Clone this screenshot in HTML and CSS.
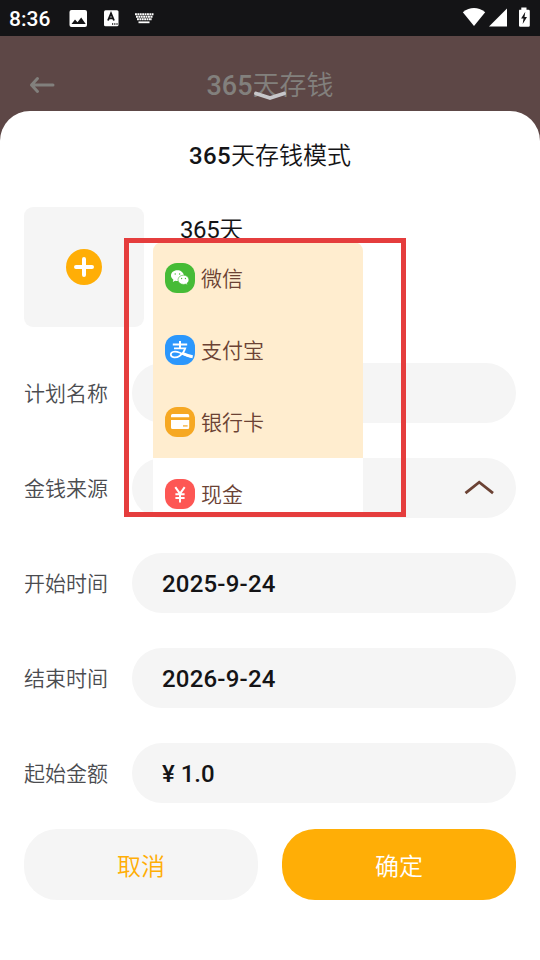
FILE: index.html
```html
<!DOCTYPE html>
<html lang="zh-CN">
<head>
<meta charset="utf-8">
<title>365天存钱</title>
<link rel="stylesheet" href="styles.css">
</head>
<body>
<div class="screen">
  <div class="status">
    <span class="clock">8:36</span>
    <svg class="status-left" width="90" height="20" viewBox="0 0 90 20">
      <rect x="3.500" y="2" width="17.500" height="17" rx="2" fill="#fff"/>
      <path d="M5.500 16l3.500-4.500 2.500 2.700 3.700-4.700 4.500 6.500z" fill="#141416"/>
      <rect x="38" y="2.300" width="14.500" height="16" rx="1.500" fill="#fff"/>
      <path d="M42 12.500L45 5.500l3 7M43 10.400h4" fill="none" stroke="#141416" stroke-width="1.900"/>
      <path d="M46 16h1.200m1 0h1.200m1 0h1.200" stroke="#141416" stroke-width="1.300"/>
      <path d="M69 6.200h18.500M70 8.700h17" stroke="#fff" stroke-width="2" stroke-dasharray="1.900 .5"/>
      <path d="M71 11.300h15" stroke="#fff" stroke-width="1.900" stroke-dasharray="1.900 .5"/>
      <path d="M72.500 14.300h11" stroke="#fff" stroke-width="1.800"/>
    </svg>
    <svg class="status-right" width="70" height="22" viewBox="0 0 70 22">
      <path d="M1.800 5.200Q13 -3 24.200 5.200L13 19z" fill="#fff"/>
      <path d="M28 19.500L46 1.500v18z" fill="#fff"/>
      <path d="M58.500 2.500h2V.3h5.200v2.200h2q1.300 0 1.300 1.300v14.500q0 1.300-1.300 1.300h-8.200q-1.300 0-1.300-1.300V3.500z" transform="translate(-.2 .2)" fill="#fff"/>
      <path d="M64.300 4.800l-4.200 6.700h2.400l-.8 5.600 4.300-7.200h-2.500z" fill="#141416"/>
    </svg>
  </div>
  <header class="topbar">
    <svg class="back" width="26" height="18" viewBox="0 0 26 18"><path d="M24 9H2.500M8.500 2.500L2.500 9l6 6.500" fill="none" stroke="#82807d" stroke-width="3" stroke-linecap="round" stroke-linejoin="round"/></svg>
    <h1 class="page-title">365<span class="cjk">天存钱</span></h1>
    <svg class="grabber" width="34" height="13" viewBox="0 0 34 13"><path d="M3 4.500l14 4.500 14-4.500" fill="none" stroke="#c7c7ca" stroke-width="3.900" stroke-linecap="round" stroke-linejoin="round"/></svg>
  </header>
  <main class="sheet">
    <h2 class="sheet-title">365<span class="cjk">天存钱模式</span></h2>
    <section class="intro">
      <div class="upload">
        <svg width="36" height="36" viewBox="0 0 36 36"><circle cx="18" cy="18" r="18" fill="#ffae06"/><path d="M10 18h16M18 10v16" stroke="#fff" stroke-width="4" stroke-linecap="round"/></svg>
      </div>
      <span class="mode">365<span class="cjk">天</span></span>
    </section>
    <div class="form">
      <div class="row"><span class="label">计划名称</span><div class="field"></div></div>
      <div class="row"><span class="label">金钱来源</span><div class="field select">
        <svg width="32" height="18" viewBox="0 0 32 18"><path d="M2.500 14.200L16.200 3.200 30 14.200" fill="none" stroke="#6b4234" stroke-width="2.800"/></svg>
      </div></div>
      <div class="row"><span class="label">开始时间</span><div class="field">2025-9-24</div></div>
      <div class="row"><span class="label">结束时间</span><div class="field">2026-9-24</div></div>
      <div class="row"><span class="label">起始金额</span><div class="field money">¥ 1.0</div></div>
    </div>
    <div class="actions">
      <button class="btn cancel">取消</button>
      <button class="btn confirm">确定</button>
    </div>
  </main>
  <div class="menu">
    <div class="option">
      <svg width="30" height="30" viewBox="0 0 30 30"><rect width="30" height="30" rx="12" fill="#46bb36"/>
        <path d="M12.300 7.200c-3.700 0-6.300 2.400-6.300 5.400 0 1.700.9 3.200 2.400 4.200l-.6 2.200 2.400-1.300q1 .3 2.300.3 7-.5 6.400-5.700c-.5-3-3.200-5.100-6.600-5.100z" fill="#fff"/>
        <path d="M18.500 12.200c-3.400 0-5.500 2.200-5.500 4.600 0 2.600 2.400 4.600 5.500 4.600q1 0 2-.3l1.900 1-.5-1.700c1.300-.9 2-2.100 2-3.600 0-2.500-2.300-4.600-5.400-4.600z" fill="#fff" stroke="#46bb36" stroke-width=".6"/>
        <g fill="#46bb36"><circle cx="10.200" cy="11" r=".7"/><circle cx="14.600" cy="11" r=".7"/><circle cx="16.600" cy="15.500" r=".65"/><circle cx="20.400" cy="15.500" r=".65"/></g>
      </svg><span>微信</span>
    </div>
    <div class="option">
      <svg width="30" height="30" viewBox="0 0 30 30"><rect width="30" height="30" rx="12" fill="#2b97fc"/>
        <g fill="none" stroke="#fff"><path d="M7.800 9.500h14.400M15 6v7" stroke-width="2"/><path d="M9 13.300h11.300c-1 3.200-3.200 6-5.800 7.700-3.100 2-8.700 2-8.700-1.500 0-3 4.600-3.700 8.500-2 4.500 1.700 8.500 3.800 12.700 4.500" stroke-width="1.700"/><path d="M17.500 18.300c3.400 1.500 6.800 2.900 10.200 3.500" stroke-width="2.900"/></g>
      </svg><span>支付宝</span>
    </div>
    <div class="option">
      <svg width="30" height="30" viewBox="0 0 30 30"><rect width="30" height="30" rx="12" fill="#f6a823"/>
        <path d="M7.500 7h15.200q1.500 0 1.500 1.500v1.800H6V8.500Q6 7 7.500 7zM6 13h18.200v7.500q0 1.500-1.500 1.500H7.500Q6 22 6 20.500z" fill="#fff"/><path d="M18 18.900h4.600" stroke="#f6b64d" stroke-width="1.500"/>
      </svg><span>银行卡</span>
    </div>
    <div class="option cash">
      <svg width="30" height="30" viewBox="0 0 30 30"><rect width="30" height="30" rx="12" fill="#fd5754"/>
        <path d="M10.300 8.200l4.700 6.500 4.700-6.500M15 14.500v9M10.400 15.200h9.200M10.400 19h9.200" fill="none" stroke="#fff" stroke-width="2"/>
      </svg><span>现金</span>
    </div>
  </div>
  <div class="highlight"></div>
</div>
</body>
</html>
```
FILE: styles.css
```css
* { box-sizing: border-box; }
body { margin: 0; font-family: Roboto, "Noto Sans CJK SC", sans-serif; color: #141416; }
h1, h2 { margin: 0; font-weight: 500; }
svg { display: block; flex: none; }
.screen { position: relative; width: 540px; height: 960px; overflow: hidden; background: #5d4746; }
.status { height: 36px; background: #141416; color: #fff; display: flex; align-items: center; padding: 0 9px; }
.clock { font-size: 21px; font-weight: 500; width: 57px; line-height: 36px; padding-top: 1px; }
.status-right { margin-left: auto; }
.cjk { font-weight: 350; letter-spacing: 0; }
.topbar { position: relative; height: 75px; display: flex; align-items: center; justify-content: center; padding-top: 24px; }
.back { position: absolute; left: 29px; top: 40px; }
.page-title { font-size: 27px; line-height: 40px; color: #82807d; }
.grabber { position: absolute; left: 253px; top: 53px; }
.sheet { height: 849px; background: #fff; border-radius: 30px 30px 0 0; padding: 25px 24px 0; }
.sheet-title { font-size: 24px; line-height: 40px; text-align: center; letter-spacing: .4px; }
.intro { display: flex; gap: 36px; margin-top: 31px; }
.upload { width: 120px; height: 120px; border-radius: 9px; background: #f5f5f5; display: flex; align-items: center; justify-content: center; }
.mode { font-size: 24px; line-height: 40px; margin-top: 3px; letter-spacing: -.4px; }
.form { display: flex; flex-direction: column; gap: 35px; margin-top: 36px; }
.row { display: flex; align-items: center; gap: 24px; height: 60px; }
.label { width: 84px; padding-bottom: 2px; font-size: 21px; font-weight: 350; color: #4b4c50; white-space: nowrap; }
.field { flex: 1; height: 60px; border-radius: 30px; background: #f5f5f5; padding: 2px 21px 0 30px; display: flex; align-items: center; font-size: 24px; font-weight: 500; letter-spacing: .2px; }
.money { letter-spacing: 0; }
.select { justify-content: flex-end; padding-top: 0; }
.actions { display: flex; gap: 24px; margin-top: 26px; }
.btn { flex: 1; height: 71px; border: 0; border-radius: 33px; font: 350 24px "Noto Sans CJK SC", sans-serif; padding: 0; }
.cancel { background: #f5f5f5; color: #ffae06; }
.confirm { background: #ffae06; color: #fff; }
.menu { position: absolute; left: 153px; top: 242px; width: 210px; height: 273px; overflow: hidden; border-radius: 9px 9px 0 0; background: #fff; }
.option { height: 72px; display: flex; align-items: center; gap: 6px; padding-left: 12px; background: #ffedcf; font-size: 21px; font-weight: 350; color: #6b4234; }
.option span { padding-bottom: 2px; }
.cash { background: #fff; }
.highlight { position: absolute; left: 124px; top: 238px; width: 281.500px; height: 279px; border: 5px solid #e53d3d; }
```
